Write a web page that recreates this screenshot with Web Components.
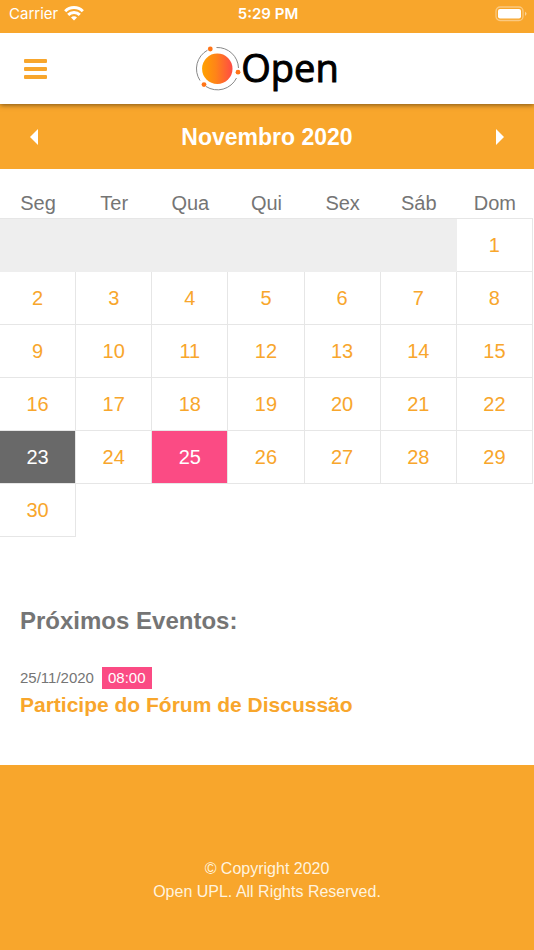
<!DOCTYPE html>
<html lang="pt">
<head>
<meta charset="utf-8">
<meta name="viewport" content="width=device-width, initial-scale=1">
<title>Open</title>
<style>
    :root {
        --brand: #f8a62c;
        --accent: #fb4b84;
        --today: #696969;
        --text: #757575;
        --line: #e6e6e6;
        --empty: #eeeeee;
    }
    body {
        margin: 0;
        min-height: 100vh;
        display: flex;
        flex-direction: column;
        background: #fff;
        color: var(--text);
        font-family: "Liberation Sans", Arial, sans-serif;
    }
</style>
</head>
<body>
<status-bar carrier="Carrier" time="5:29 PM"></status-bar>
<app-header>Open</app-header>
<month-calendar year="2020" month="11" today="23" events="25"></month-calendar>
<event-list>
    <span slot="title">Próximos Eventos:</span>
    <event-item date="25/11/2020" time="08:00">Participe do Fórum de Discussão</event-item>
</event-list>
<app-footer>
    <div>© Copyright 2020</div>
    <div>Open UPL. All Rights Reserved.</div>
</app-footer>

<script>
class BaseElement extends HTMLElement {
    constructor() {
        super()
        this.attachShadow({ mode: 'open' })
    }
    connectedCallback() {
        const template = document.createElement('template')
        template.innerHTML = this.render()
        this.shadowRoot.replaceChildren(template.content.cloneNode(true))
    }
}

class StatusBar extends BaseElement {
    render() {
        return `
        <style>
            :host {
                display: grid;
                grid-template-columns: 1fr auto 1fr;
                align-items: center;
                height: 27px;
                padding: 0 7px 6px 9px;
                position: relative;
                z-index: 2;
                background: var(--brand);
                color: #fff;
                font: 15px/27px Inter, "Liberation Sans", sans-serif;
            }
            .left { display: flex; align-items: center; gap: 6px; }
            .time { font-weight: 600; }
            .battery { justify-self: end; }
            svg { display: block; }
        </style>
        <span class="left">
            <span>${this.getAttribute('carrier')}</span>
            <svg width="20" height="15" viewBox="0 0 20 15" fill="none" stroke="#fff" stroke-width="3" aria-hidden="true">
                <path d="M1.2 5.2 A12.4 12.4 0 0 1 18.8 5.2"/>
                <path d="M4.2 8.9 A8.2 8.2 0 0 1 15.8 8.9"/>
                <path d="M7 11.6 A4.2 4.2 0 0 1 13 11.6 L10 14.6Z" fill="#fff" stroke="none"/>
            </svg>
        </span>
        <span class="time">${this.getAttribute('time')}</span>
        <svg class="battery" width="32" height="16" viewBox="0 0 32 16" aria-hidden="true">
            <rect x="1" y="1" width="27" height="13.5" rx="4" fill="none" stroke="#fff" stroke-opacity=".4" stroke-width="1.3"/>
            <rect x="3" y="3" width="23" height="9.5" rx="2" fill="#fff"/>
            <path d="M30 5.5 Q33 7.8 30 10Z" fill="#fff" fill-opacity=".5"/>
        </svg>`
    }
}
customElements.define('status-bar', StatusBar)

class AppHeader extends BaseElement {
    render() {
        return `
        <style>
            :host {
                display: grid;
                grid-template-columns: 1fr auto 1fr;
                align-items: center;
                height: 71px;
                padding: 0 24px;
                background: #fff;
                position: relative;
                z-index: 1;
                box-shadow: 0 1px 5px rgba(0, 0, 0, .5);
            }
            button {
                justify-self: start;
                padding: 0;
                border: 0;
                background: none;
                cursor: pointer;
            }
            svg { display: block; }
            .logo {
                display: flex;
                align-items: center;
                color: #000;
                font: 38px/48px "Open Sans", "Noto Sans", sans-serif;
                text-decoration: none;
            }
            .name {
                padding-bottom: 4px;
                -webkit-text-stroke: 1px #000;
            }
        </style>
        <button type="button" aria-label="Menu">
            <svg width="23" height="22" viewBox="0 0 23 22" fill="#f8a62c">
                <rect y="1" width="23" height="4" rx="1"/>
                <rect y="9" width="23" height="4" rx="1"/>
                <rect y="17" width="23" height="4" rx="1"/>
            </svg>
        </button>
        <a class="logo" href="#">
            <svg width="46" height="46" viewBox="0 0 46 46" aria-hidden="true">
                <defs>
                    <linearGradient id="sun">
                        <stop offset="0" stop-color="#ffa200"/>
                        <stop offset=".45" stop-color="#ff8418"/>
                        <stop offset="1" stop-color="#ff4b45"/>
                    </linearGradient>
                </defs>
                <g fill="none" stroke="#888" stroke-width="1">
                    <path d="M21.5 1.5 A21.2 21.2 0 0 1 43.5 22"/>
                    <path d="M41.5 32 A21.2 21.2 0 0 1 11 40.5"/>
                    <path d="M5 34.5 A21.2 21.2 0 0 1 12.5 4.2"/>
                </g>
                <circle cx="22.3" cy="22.7" r="15.2" fill="url(#sun)"/>
                <circle cx="15.3" cy="3" r="2.4" fill="#ff7417"/>
                <circle cx="43" cy="26.2" r="2.4" fill="#ff7417"/>
                <circle cx="9" cy="38.6" r="2.4" fill="#ff7417"/>
            </svg>
            <span class="name"><slot></slot></span>
        </a>`
    }
}
customElements.define('app-header', AppHeader)

const MONTHS = ['Janeiro', 'Fevereiro', 'Março', 'Abril', 'Maio', 'Junho', 'Julho',
    'Agosto', 'Setembro', 'Outubro', 'Novembro', 'Dezembro']
const WEEKDAYS = ['Seg', 'Ter', 'Qua', 'Qui', 'Sex', 'Sáb', 'Dom']

class MonthCalendar extends BaseElement {
    rows() {
        const year = Number(this.getAttribute('year'))
        const month = Number(this.getAttribute('month'))
        const today = Number(this.getAttribute('today'))
        const events = this.getAttribute('events').split(',').map(Number)
        // weeks start on monday
        const offset = (new Date(year, month - 1, 1).getDay() + 6) % 7
        const total = new Date(year, month, 0).getDate()

        const cells = []
        if (offset)
            cells.push(`<td class="empty" colspan="${offset}"></td>`)
        let html = ''
        for (let day = 1; day <= total; day++) {
            let type = ''
            if (day === today) type = 'today'
            if (events.includes(day)) type = 'event'
            cells.push(`<td class="${type}"><a href="#">${day}</a></td>`)
            if ((offset + day) % 7 === 0 || day === total)
                html += `<tr>${cells.splice(0).join('')}</tr>`
        }
        return html
    }

    render() {
        const name = MONTHS[this.getAttribute('month') - 1]
        return `
        <style>
            :host { display: block; }
            .bar {
                display: flex;
                align-items: center;
                justify-content: space-between;
                height: 65px;
                padding: 0 20px;
                background: var(--brand);
                color: #fff;
            }
            h2 { margin: 0; font-size: 23px; line-height: 28px; }
            button {
                padding: 8px 10px;
                border: 0;
                background: none;
                cursor: pointer;
            }
            svg { display: block; }
            .days { padding: 20px 1px 0 0; }
            table {
                width: 100%;
                table-layout: fixed;
                border-collapse: separate;
                border-spacing: 0;
                font-size: 20px;
                text-align: center;
            }
            th {
                height: 29px;
                padding: 0;
                border-bottom: 1px solid var(--line);
                font-weight: 400;
            }
            td {
                height: 52px;
                padding: 0;
                border-right: 1px solid var(--line);
                border-bottom: 1px solid var(--line);
            }
            td a {
                display: block;
                color: var(--brand);
                line-height: 52px;
                text-decoration: none;
            }
            .empty { background: var(--empty); border-color: var(--empty); }
            .today a { background: var(--today); color: #fff; }
            .event a { background: var(--accent); color: #fff; }
        </style>
        <div class="bar">
            <button type="button" aria-label="Mês anterior">
                <svg width="8" height="16" viewBox="0 0 8 16"><path d="M8 0V16L0 8Z" fill="#fff"/></svg>
            </button>
            <h2>${name} ${this.getAttribute('year')}</h2>
            <button type="button" aria-label="Próximo mês">
                <svg width="8" height="16" viewBox="0 0 8 16"><path d="M0 0V16L8 8Z" fill="#fff"/></svg>
            </button>
        </div>
        <div class="days">
            <table>
                <thead><tr>${WEEKDAYS.map(d => `<th scope="col">${d}</th>`).join('')}</tr></thead>
                <tbody>${this.rows()}</tbody>
            </table>
        </div>`
    }
}
customElements.define('month-calendar', MonthCalendar)

class EventList extends BaseElement {
    render() {
        return `
        <style>
            :host { display: block; padding: 69px 20px 46px; }
            h3 { margin: 0 0 31px; font-size: 24px; line-height: 30px; }
        </style>
        <h3><slot name="title"></slot></h3>
        <slot></slot>`
    }
}
customElements.define('event-list', EventList)

class EventItem extends BaseElement {
    render() {
        return `
        <style>
            :host { display: block; }
            .when {
                display: flex;
                align-items: center;
                gap: 8px;
                font-size: 15px;
                line-height: 22px;
            }
            .time {
                padding: 0 6px;
                background: var(--accent);
                color: #fff;
            }
            .name {
                display: block;
                margin-top: 2px;
                color: var(--brand);
                font-size: 21px;
                font-weight: 700;
                line-height: 28px;
                text-decoration: none;
            }
        </style>
        <div class="when">
            <span>${this.getAttribute('date')}</span>
            <span class="time">${this.getAttribute('time')}</span>
        </div>
        <a class="name" href="#"><slot></slot></a>`
    }
}
customElements.define('event-item', EventItem)

class AppFooter extends BaseElement {
    render() {
        return `
        <style>
            :host {
                display: block;
                flex: 1;
                padding: 92px 20px 24px;
                background: var(--brand);
                color: #fff3df;
                font-size: 16px;
                font-weight: 300;
                line-height: 23px;
                text-align: center;
            }
        </style>
        <slot></slot>`
    }
}
customElements.define('app-footer', AppFooter)
</script>
</body>
</html>
